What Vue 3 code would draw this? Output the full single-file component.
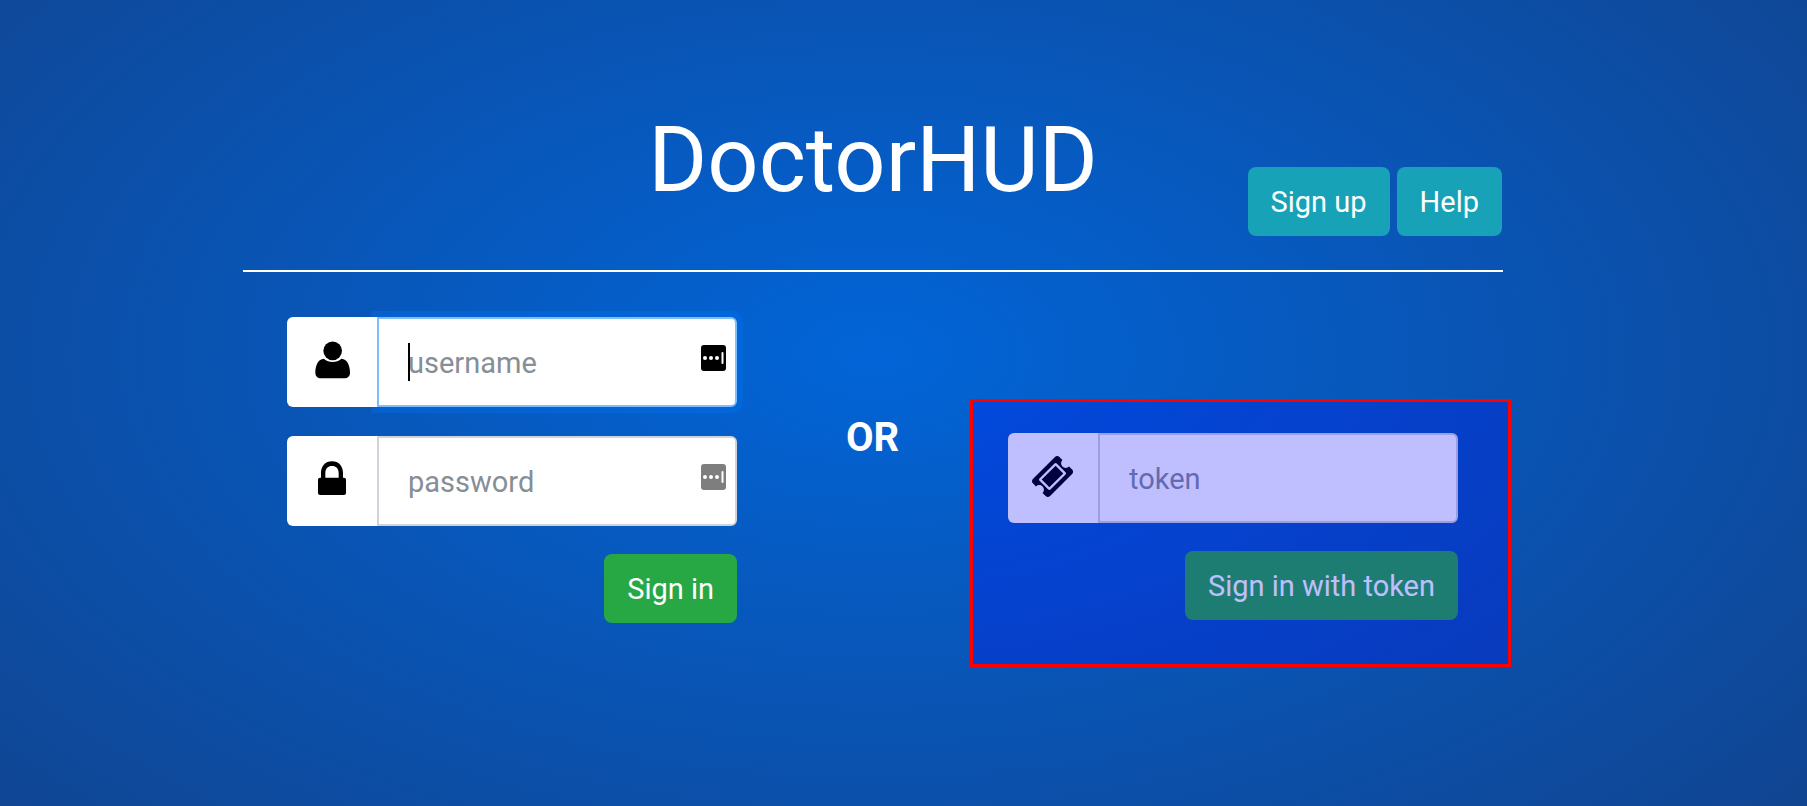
<script setup>
import { ref } from 'vue'

const username = ref('')
const password = ref('')
const token = ref('')
</script>

<template>
  <div class="page">
    <main class="container">
      <header class="header">
        <h1>DoctorHUD</h1>
        <nav class="actions">
          <button type="button" class="btn info">Sign up</button>
          <button type="button" class="btn info">Help</button>
        </nav>
      </header>

      <div class="forms">
        <form class="form" @submit.prevent>
          <div class="group focused">
            <label class="addon" for="username" aria-label="Username">
              <svg width="35" height="38" viewBox="0 0 107 114">
                <circle cx="54" cy="29" r="28.500" />
                <path d="M27 53C10 54 1 73 1 96C1 106 8 113 18 113H90C100 113 107 106 107 96C107 73 98 54 81 53C73 60 64 63 54 63S35 60 27 53Z" />
              </svg>
            </label>
            <input id="username" v-model="username" type="text" placeholder="username" />
            <span class="caret"></span>
            <svg class="manager" viewBox="0 0 25 26">
              <rect width="25" height="26" rx="3" />
              <g fill="#fff">
                <circle cx="4" cy="13" r="2" />
                <circle cx="10" cy="13" r="2" />
                <circle cx="16" cy="13" r="2" />
                <rect x="20.500" y="7" width="2" height="12" rx="1" />
              </g>
            </svg>
          </div>
          <div class="group">
            <label class="addon" for="password" aria-label="Password">
              <svg width="30" height="36" viewBox="0 0 90 108">
                <path fill-rule="evenodd" d="M12 50V36C12 15 25 1 45 1S78 15 78 36V50H81Q87 50 87 56V96Q87 102 81 102H9Q3 102 3 96V56Q3 50 9 50ZM25 50H65V36C65 22 57 15 45 15S25 22 25 36Z" />
              </svg>
            </label>
            <input id="password" v-model="password" type="password" placeholder="password" />
            <svg class="manager dim" viewBox="0 0 25 26">
              <rect width="25" height="26" rx="3" />
              <g fill="#fff">
                <circle cx="4" cy="13" r="2" />
                <circle cx="10" cy="13" r="2" />
                <circle cx="16" cy="13" r="2" />
                <rect x="20.500" y="7" width="2" height="12" rx="1" />
              </g>
            </svg>
          </div>
          <button type="submit" class="btn success">Sign in</button>
        </form>

        <strong class="or">OR</strong>

        <form class="form token-form" @submit.prevent>
          <div class="group">
            <label class="addon" for="token" aria-label="Token">
              <svg width="41" height="41" viewBox="54 54 1684 1684">
                <path d="M1024 452l316 316-572 572-316-316zm-211 979l618-618q19-19 19-45t-19-45l-362-362q-18-18-45-18t-45 18l-618 618q-19 19-19 45t19 45l362 362q18 18 45 18t45-18zm889-637l-907 908q-37 37-90.500 37t-90.500-37l-126-126q56-56 56-136t-56-136-136-56-136 56l-125-126q-37-37-37-90.500t37-90.500l907-906q37-37 90.500-37t90.500 37l125 125q-56 56-56 136t56 136 136 56 136-56l126 125q37 37 37 90.500t-37 90.500z" />
              </svg>
            </label>
            <input id="token" v-model="token" type="text" placeholder="token" />
          </div>
          <button type="submit" class="btn success">Sign in with token</button>
          <div class="highlight"></div>
        </form>
      </div>
    </main>
  </div>
</template>

<style>
body {
  margin: 0;
}
</style>

<style scoped>
.page {
  box-sizing: border-box;
  min-height: 100vh;
  padding: 101px 61px 0 0;
  background: radial-gradient(ellipse 122% 154% at calc(50% - 30px) 44%, #0264d6 1%, #1c2b5a 100%);
  color: #fff;
  font-family: Roboto, "Liberation Sans", sans-serif;
  font-size: 29px;
}

.container {
  max-width: 1260px;
  margin: 0 auto;
}

.header {
  display: grid;
  grid-template-columns: 1fr auto 1fr;
  align-items: start;
  padding-bottom: 34px;
  border-bottom: 2px solid #fff;
}

h1 {
  grid-column: 2;
  margin: 0;
  font-size: 90px;
  line-height: 120px;
  font-weight: 400;
}

.actions {
  display: flex;
  justify-content: flex-end;
  gap: 7px;
  padding: 66px 1px 0 0;
}

.btn {
  box-sizing: border-box;
  height: 69px;
  padding: 0 23px;
  border: 0;
  border-radius: 8px;
  color: #fff;
  font: inherit;
  white-space: nowrap;
}

.info {
  background: #17a2b8;
}

.success {
  background: #28a745;
}

.forms {
  display: flex;
  align-items: flex-start;
  justify-content: space-between;
  padding: 45px 45px 0 44px;
}

.form {
  position: relative;
  display: flex;
  flex: 0 1 450px;
  flex-direction: column;
  align-items: flex-end;
  min-width: 0;
}

.token-form {
  margin-top: 116px;
}

.group {
  position: relative;
  display: flex;
  width: 100%;
  height: 90px;
  margin-bottom: 29px;
}

.form .btn {
  margin-top: -1px;
}

.addon {
  z-index: 1;
  display: flex;
  flex: none;
  align-items: center;
  justify-content: center;
  box-sizing: border-box;
  width: 90px;
  padding-bottom: 4px;
  border-radius: 6px 0 0 6px;
  background: #fff;
}

input {
  box-sizing: border-box;
  flex: 1;
  min-width: 0;
  padding: 2px 29px 0;
  border: 2px solid #ced4da;
  border-radius: 0 6px 6px 0;
  outline: 0;
  background: #fff;
  color: #495057;
  font: inherit;
}

input::placeholder {
  color: #868e96;
  opacity: 1;
}

.focused input {
  border-color: #80bdff;
  box-shadow: 0 0 0 6px rgba(0, 123, 255, 0.25);
}

.caret {
  position: absolute;
  top: 26px;
  left: 121px;
  width: 2px;
  height: 38px;
  background: #000;
}

.manager {
  position: absolute;
  top: 28px;
  right: 11px;
  width: 25px;
  height: 26px;
}

.dim {
  opacity: 0.5;
}

.or {
  margin-top: 97px;
  font-size: 40px;
  line-height: 48px;
  font-weight: 700;
}

.highlight {
  position: absolute;
  inset: -34px -53px -47px -38px;
  z-index: 2;
  border: 3px solid #f00;
  background: rgba(0, 0, 255, 0.25);
  background-clip: padding-box;
  pointer-events: none;
}
</style>
